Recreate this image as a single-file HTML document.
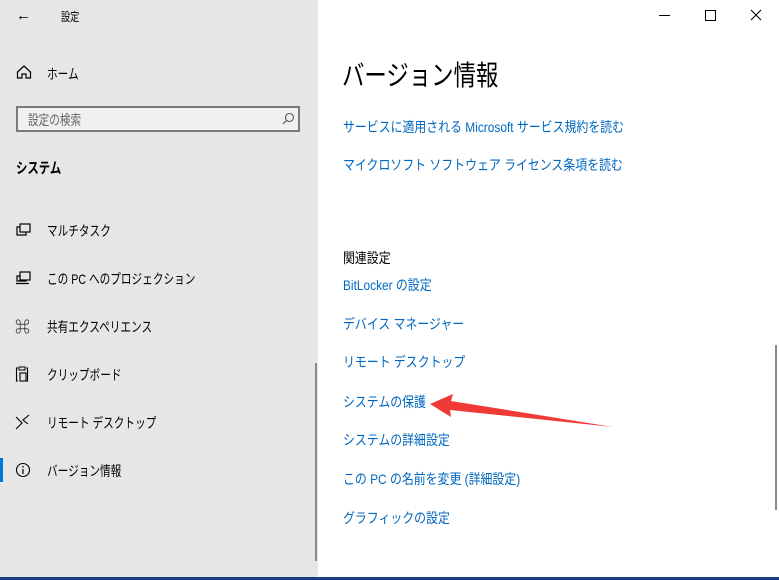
<!DOCTYPE html><html><head><meta charset="utf-8"><style>
body{margin:0;width:779px;height:580px;overflow:hidden;position:relative;font-family:"Liberation Sans","Noto Sans CJK JP",sans-serif;background:#fff}
.l{position:absolute;left:0;top:0;width:318px;height:580px;background:#e6e6e6}
.t{position:absolute;font-size:14px;color:#000;white-space:nowrap;transform-origin:0 0;transform:scaleX(.76)}
.a{position:absolute;left:343px;font-size:14px;color:#0067c0;white-space:nowrap;transform-origin:0 0;transform:scaleX(.85)}
</style></head><body>
<div class="l"></div>
<div class="t" style="left:16px;top:7px;font-size:15px;transform:none">←</div>
<div class="t" style="left:61px;top:8px;font-size:12px">設定</div>
<svg style="position:absolute;left:16px;top:64px" width="16" height="16" viewBox="0 0 16 16"><path d="M1.5 8 L8 2 L14.5 8 V14 H10 V10 H6 V14 H1.5 Z" fill="none" stroke="#000" stroke-width="1.2"/></svg>
<div class="t" style="left:47px;top:64px">ホーム</div>
<div style="position:absolute;left:16px;top:106px;width:284px;height:26px;border:2px solid #7a7a7a;background:#f0f0f0;box-sizing:border-box"></div>
<div class="t" style="left:28px;top:110px;color:#666">設定の検索</div>
<svg style="position:absolute;left:281px;top:112px" width="14" height="14"><circle cx="8.5" cy="5.5" r="4" fill="none" stroke="#555" stroke-width="1.1"/><path d="M5.5 8.5 L2 12" stroke="#555" stroke-width="1.2"/></svg>
<div class="t" style="left:16px;top:157px;font-weight:bold;font-size:15px">システム</div>
<svg style="position:absolute;left:15px;top:222px" width="17" height="16"><rect x="5" y="2" width="10" height="8" fill="none" stroke="#000" stroke-width="1.2"/><path d="M5 5 H2 V13 H11 V10" fill="none" stroke="#000" stroke-width="1.2"/></svg>
<div class="t" style="left:47px;top:221px">マルチタスク</div>
<svg style="position:absolute;left:15px;top:270px" width="17" height="16"><rect x="5" y="2" width="10" height="8" fill="none" stroke="#000" stroke-width="1.2"/><path d="M5 6 H2 V11 H11 V10 M1 13.5 H14" fill="none" stroke="#000" stroke-width="1.2"/></svg>
<div class="t" style="left:47px;top:269px">この PC へのプロジェクション</div>
<div class="t" style="left:15px;top:316px;font-size:15px;transform:none">⌘</div>
<div class="t" style="left:47px;top:317px">共有エクスペリエンス</div>
<svg style="position:absolute;left:15px;top:366px" width="17" height="17"><path d="M3 2 H1.5 V15 H3 M11 2 H12.5 V15 H11" fill="none" stroke="#000" stroke-width="1.1"/><rect x="4" y="1" width="6" height="3" fill="none" stroke="#000"/><rect x="5" y="7" width="6" height="8" fill="none" stroke="#000" stroke-width="1.1"/></svg>
<div class="t" style="left:47px;top:365px">クリップボード</div>
<svg style="position:absolute;left:15px;top:413px" width="17" height="17"><path d="M1 4 L7 10 L1 16 M14 2 L8 7 L13 11" fill="none" stroke="#000" stroke-width="1.1"/></svg>
<div class="t" style="left:47px;top:413px">リモート デスクトップ</div>
<div style="position:absolute;left:0;top:458px;width:3px;height:24px;background:#0078d7"></div>
<svg style="position:absolute;left:15px;top:462px" width="17" height="17"><circle cx="8" cy="8" r="6.5" fill="none" stroke="#000" stroke-width="1.1"/><path d="M8 7 V12" stroke="#000" stroke-width="1.2"/><circle cx="8" cy="4.8" r=".8"/></svg>
<div class="t" style="left:47px;top:461px">バージョン情報</div>
<div style="position:absolute;left:315px;top:363px;width:2px;height:198px;background:#8a8a8a"></div>
<div style="position:absolute;left:659px;top:15px;width:11px;height:1px;background:#000"></div>
<div style="position:absolute;left:705px;top:10px;width:9px;height:9px;border:1px solid #000"></div>
<svg style="position:absolute;left:750px;top:9px" width="12" height="12"><path d="M1 1 L11 11 M11 1 L1 11" stroke="#000" stroke-width="1.1"/></svg>
<div class="t" style="left:342px;top:54px;font-size:28px;transform:scaleX(.8)">バージョン情報</div>
<div class="a" style="top:117px">サービスに適用される Microsoft サービス規約を読む</div>
<div class="a" style="top:155px">マイクロソフト ソフトウェア ライセンス条項を読む</div>
<div class="t" style="left:343px;top:248px;transform:scaleX(.85)">関連設定</div>
<div class="a" style="top:275px">BitLocker の設定</div>
<div class="a" style="top:314px">デバイス マネージャー</div>
<div class="a" style="top:352px">リモート デスクトップ</div>
<div class="a" style="top:392px">システムの保護</div>
<div class="a" style="top:430px">システムの詳細設定</div>
<div class="a" style="top:469px">この PC の名前を変更 (詳細設定)</div>
<div class="a" style="top:508px">グラフィックの設定</div>
<svg style="position:absolute;left:0;top:0" width="779" height="580"><path d="M430 404 L453 394 L451 401 L613 427 L450 410 L451 417 Z" fill="#f03a35"/></svg>
<div style="position:absolute;left:775px;top:345px;width:2px;height:165px;background:#8a8a8a"></div>
<div style="position:absolute;left:0;top:577px;width:779px;height:3px;background:#1b3d7a"></div>
</body></html>
